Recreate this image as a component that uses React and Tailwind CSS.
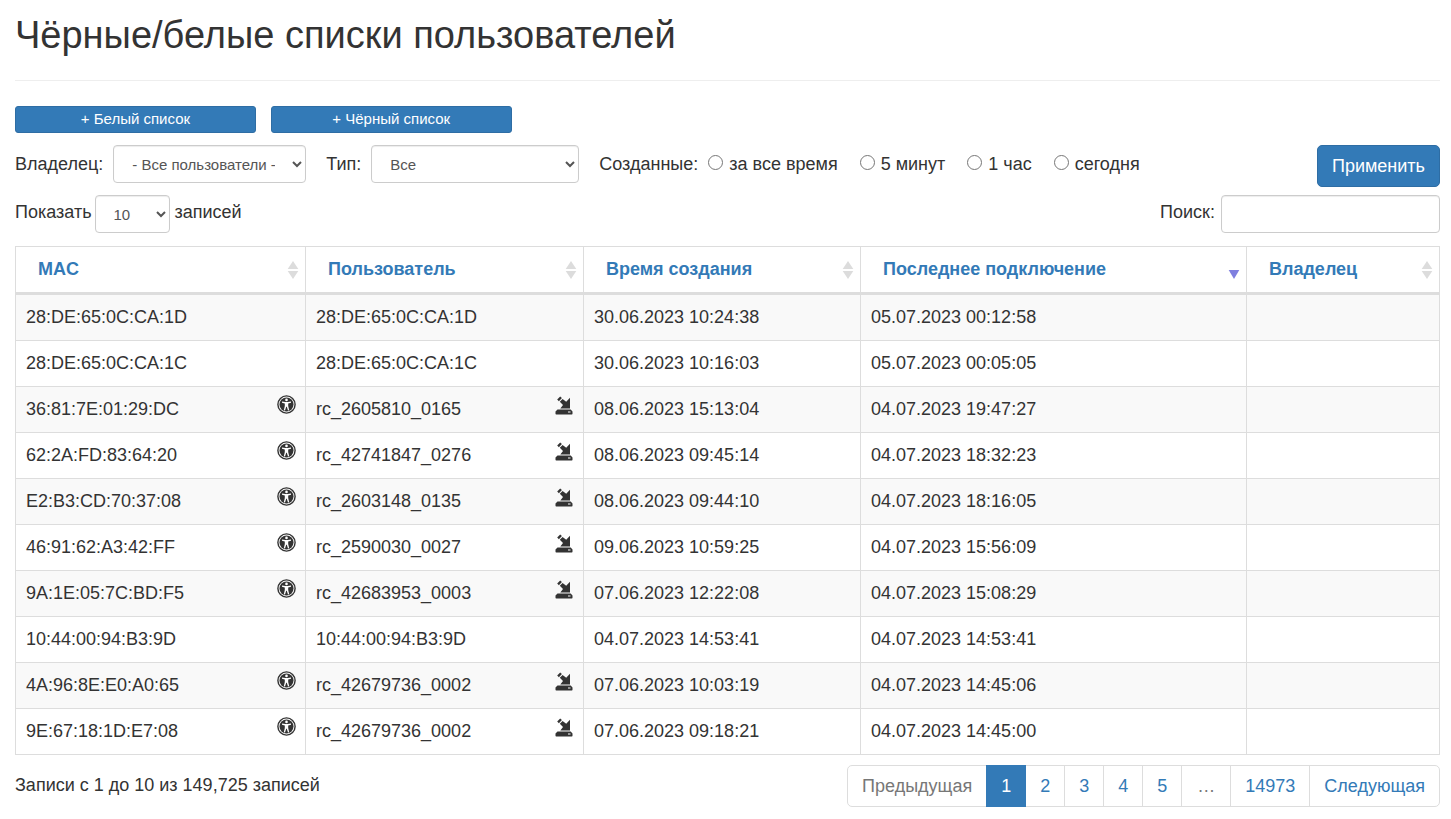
import React, { useState } from 'react'
import clsx from 'clsx'

const columns = [
  { key: 'mac', title: 'MAC', width: 'w-[290px]' },
  { key: 'user', title: 'Пользователь', width: 'w-[278px]' },
  { key: 'created', title: 'Время создания', width: 'w-[277px]' },
  { key: 'last', title: 'Последнее подключение', width: 'w-[386px]' },
  { key: 'owner', title: 'Владелец', width: 'w-[193px]' },
]

const rows = [
  { mac: '28:DE:65:0C:CA:1D', user: '28:DE:65:0C:CA:1D', created: '30.06.2023 10:24:38', last: '05.07.2023 00:12:58' },
  { mac: '28:DE:65:0C:CA:1C', user: '28:DE:65:0C:CA:1C', created: '30.06.2023 10:16:03', last: '05.07.2023 00:05:05' },
  { mac: '36:81:7E:01:29:DC', user: 'rc_2605810_0165', created: '08.06.2023 15:13:04', last: '04.07.2023 19:47:27', guest: true },
  { mac: '62:2A:FD:83:64:20', user: 'rc_42741847_0276', created: '08.06.2023 09:45:14', last: '04.07.2023 18:32:23', guest: true },
  { mac: 'E2:B3:CD:70:37:08', user: 'rc_2603148_0135', created: '08.06.2023 09:44:10', last: '04.07.2023 18:16:05', guest: true },
  { mac: '46:91:62:A3:42:FF', user: 'rc_2590030_0027', created: '09.06.2023 10:59:25', last: '04.07.2023 15:56:09', guest: true },
  { mac: '9A:1E:05:7C:BD:F5', user: 'rc_42683953_0003', created: '07.06.2023 12:22:08', last: '04.07.2023 15:08:29', guest: true },
  { mac: '10:44:00:94:B3:9D', user: '10:44:00:94:B3:9D', created: '04.07.2023 14:53:41', last: '04.07.2023 14:53:41' },
  { mac: '4A:96:8E:E0:A0:65', user: 'rc_42679736_0002', created: '07.06.2023 10:03:19', last: '04.07.2023 14:45:06', guest: true },
  { mac: '9E:67:18:1D:E7:08', user: 'rc_42679736_0002', created: '07.06.2023 09:18:21', last: '04.07.2023 14:45:00', guest: true },
]

const periods = [
  { id: 'all', label: 'за все время' },
  { id: 'min5', label: '5 минут' },
  { id: 'hour', label: '1 час' },
  { id: 'today', label: 'сегодня' },
]

const pages = ['1', '2', '3', '4', '5', '…', '14973']

const control = 'h-[38px] rounded border border-[#ccc] bg-white text-[15px] text-[#555] shadow-[inset_0_1px_1px_rgba(0,0,0,0.075)]'
const primary = 'border border-[#2e6da4] bg-[#337ab7] text-white'

const AccessIcon = () => (
  <svg viewBox="0 0 19 19" className="h-[19px] w-[19px] shrink-0" aria-hidden="true">
    <circle cx="9.5" cy="9.5" r="8.6" fill="none" stroke="#333" strokeWidth="1.4" />
    <circle cx="9.5" cy="9.5" r="7" fill="#333" />
    <circle cx="9.5" cy="4.9" r="1.3" fill="#fff" />
    <path d="M5 6.6l3.2.5h2.6L14 6.6v1.2l-2.8.8v2.5l1 4.1-1.2.3-1.2-3.7h-.6L8 15.5l-1.2-.3 1-4.1V8.600L5 7.800z" fill="#fff" />
  </svg>
)

const ImportIcon = () => (
  <svg viewBox="0 -1 18 20" className="h-5 w-[18px] shrink-0" fill="#333" aria-hidden="true">
    <path d="M2.200 3.600L5.200.500l1.700 1.600L3.900 5.200z" />
    <path d="M4.800 5.800L7.600 3l3.600 2.800L15 1.700V12.600H5.300L8 9z" />
    <path d="M2.500 13.600h13.200l1.800 1.800v2.300q0 .7-.7.7H1.200q-.7 0-.7-.7v-2.300zM13 15.600v1h2.500v-1z" fillRule="evenodd" />
  </svg>
)

const SortMark = ({ active }) => (
  <svg viewBox="0 0 12 20" className="h-5 w-3 shrink-0" aria-hidden="true">
    {!active && <path d="M6 1l5.300 8H.700z" fill="#dcdcdc" />}
    <path d={active ? 'M.700 10h10.600L6 19z' : 'M.700 11h10.600L6 19z'} fill={active ? '#7f7fdf' : '#dcdcdc'} />
  </svg>
)

const App = () => {
  const [period, setPeriod] = useState('')
  const [search, setSearch] = useState('')

  return (
    <div className="pl-[15px] pr-[11px] pb-3 font-['Liberation_Sans',Arial,sans-serif] text-[18px] leading-[25px] text-[#333]">
      <h1 className="border-b border-[#eee] pt-3 pb-[22px] text-[38px] leading-[46px]">Чёрные/белые списки пользователей</h1>

      <div className="mt-[25px] flex gap-[15px]">
        <button type="button" className={clsx(primary, 'h-[27px] w-[16.9%] rounded-[3px] pb-[2px] text-[15px] leading-[22px]')}>+ Белый список</button>
        <button type="button" className={clsx(primary, 'h-[27px] w-[16.9%] rounded-[3px] pb-[2px] text-[15px] leading-[22px]')}>+ Чёрный список</button>
      </div>

      {/* Фильтры */}
      <form className="mt-3 flex items-start justify-between" onSubmit={(e) => e.preventDefault()}>
        <div className="flex items-center">
          <label htmlFor="owner" className="mr-[10px]">Владелец:</label>
          <select id="owner" className={clsx(control, 'mr-5 w-[193px] px-[14px]')}>
            <option>- Все пользователи -</option>
          </select>
          <label htmlFor="type" className="mr-[10px]">Тип:</label>
          <select id="type" className={clsx(control, 'mr-5 w-[208px] px-[14px]')}>
            <option>Все</option>
          </select>
          <fieldset className="flex items-center">
            <legend className="float-left mr-[10px]">Созданные:</legend>
            <div className="flex gap-[22px]">
              {periods.map((p) => (
                <label key={p.id} className="flex items-start gap-[6px]">
                  <input
                    type="radio"
                    name="period"
                    className="mt-[3px] h-[15px] w-[15px]"
                    checked={period === p.id}
                    onChange={() => setPeriod(p.id)}
                  />
                  {p.label}
                </label>
              ))}
            </div>
          </fieldset>
        </div>
        <button type="submit" className={clsx(primary, 'h-[42px] rounded-[5px] px-[14px]')}>Применить</button>
      </form>

      <div className="mt-2 flex items-start justify-between">
        <div className="flex items-start">
          <label htmlFor="length" className="mr-[3px] pt-[5px]">Показать</label>
          <select id="length" className={clsx(control, 'w-[75px] px-[14px]')}>
            <option>10</option>
            <option>25</option>
            <option>50</option>
          </select>
          <span className="ml-[5px] pt-[5px]">записей</span>
        </div>
        <label className="flex items-start gap-[6px]">
          <span className="pt-[5px]">Поиск:</span>
          <input type="search" className={clsx(control, 'w-[219px] px-3')} value={search} onChange={(e) => setSearch(e.target.value)} />
        </label>
      </div>

      <table className="mt-[13px] w-full table-fixed border-collapse border border-[#ddd]">
        <thead>
          <tr>
            {columns.map((c) => (
              <th key={c.key} className={clsx(c.width, 'h-[47px] border border-b-[3px] border-[#ddd] py-0 pr-[6px] pl-[22px] text-left font-bold text-[#337ab7]')}>
                <div className="flex items-center justify-between">
                  <a href="#">{c.title}</a>
                  <SortMark active={c.key === 'last'} />
                </div>
              </th>
            ))}
          </tr>
        </thead>
        <tbody>
          {rows.map((r) => (
            <tr key={r.mac} className="h-[46px] first:h-[47px] odd:bg-[#f9f9f9]">
              <td className="border border-[#ddd] pr-[9px] pl-[10px]">
                <div className="-mt-[2px] flex items-start justify-between">
                  <span className="pt-[2px]">{r.mac}</span>
                  {r.guest && <AccessIcon />}
                </div>
              </td>
              <td className="border border-[#ddd] px-[10px]">
                <div className="-mt-[2px] flex items-start justify-between">
                  <span className="pt-[2px]">{r.user}</span>
                  {r.guest && <ImportIcon />}
                </div>
              </td>
              <td className="border border-[#ddd] px-[10px]">{r.created}</td>
              <td className="border border-[#ddd] px-[10px]">{r.last}</td>
              <td className="border border-[#ddd] px-[10px]"></td>
            </tr>
          ))}
        </tbody>
      </table>

      <div className="mt-[10px] flex items-start justify-between">
        <p className="pt-2">Записи с 1 до 10 из 149,725 записей</p>
        <nav className="flex h-[42px] rounded-[5px] border border-[#ddd] leading-[40px] text-[#337ab7]">
          <span className="px-[14px] text-[#777]">Предыдущая</span>
          {pages.map((p) => {
            if (p === '…') return <span key={p} className="border-l border-[#ddd] px-[15px] text-[#777]">{p}</span>
            return (
              <a
                key={p}
                href="#"
                className={clsx(
                  'px-[14px]',
                  p === '1' ? '-my-px border-x border-[#337ab7] bg-[#337ab7] py-px text-white' : 'border-[#ddd]',
                  Number(p) > 2 && 'border-l',
                )}
              >
                {p}
              </a>
            )
          })}
          <a href="#" className="border-l border-[#ddd] px-[14px]">Следующая</a>
        </nav>
      </div>
    </div>
  )
}

export default App
